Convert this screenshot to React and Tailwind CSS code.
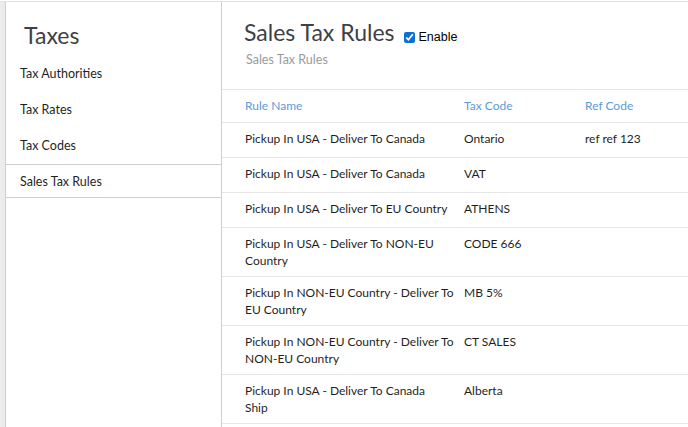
import React from "react";

const menu = ["Tax Authorities", "Tax Rates", "Tax Codes", "Sales Tax Rules"];

// each rule name is kept as the lines it breaks into in the narrow column
const rules = [
  { name: ["Pickup In USA - Deliver To Canada"], code: "Ontario", ref: "ref ref 123" },
  { name: ["Pickup In USA - Deliver To Canada"], code: "VAT", ref: "" },
  { name: ["Pickup In USA - Deliver To EU Country"], code: "ATHENS", ref: "" },
  { name: ["Pickup In USA - Deliver To NON-EU", "Country"], code: "CODE 666", ref: "" },
  { name: ["Pickup In NON-EU Country - Deliver To", "EU Country"], code: "MB 5%", ref: "" },
  { name: ["Pickup In NON-EU Country - Deliver To", "NON-EU Country"], code: "CT SALES", ref: "" },
  { name: ["Pickup In USA - Deliver To Canada", "Ship"], code: "Alberta", ref: "" },
];

export default function App() {
  return (
    <div
      className="flex h-[427px] w-[688px] overflow-hidden bg-white pt-px"
      style={{ fontFamily: "Lato, 'Open Sans', sans-serif" }}
    >
      <div className="flex w-full border-t border-[#e3e3e3]">
        {/* left rail */}
        <div className="w-[5px] shrink-0 bg-[#ececec]" />
        {/* sidebar */}
        <aside className="w-[217px] shrink-0 border-x border-[#cfcfcf]">
          <h1 className="pl-[18px] pt-[18px] text-[23px] leading-[30px] text-[#3f3f46]">Taxes</h1>
          <ul className="mt-[6px] text-[12.5px] text-[#1f1f1f]">
            {menu.map((m, i) => (
              <li
                key={m}
                className={
                  i === 3
                    ? "border-y border-[#cfcfcf] pb-[7px] pl-[14px] pt-[9px] leading-[16px]"
                    : "h-[36px] pl-[14px] pt-[10px] leading-[16px]"
                }
              >
                {m}
              </li>
            ))}
          </ul>
        </aside>
        {/* main panel */}
        <main className="flex-1 overflow-hidden">
          <div className="h-[88px] border-b border-[#e6e6e6] pl-[22px] pt-[15px]">
            <div className="flex items-center">
              <h2 className="text-[23px] leading-[30px] text-[#3f3f46]">Sales Tax Rules</h2>
              <label
                className="ml-[9px] mt-[10px] flex items-center text-[12.5px] text-black"
                style={{ fontFamily: "'Liberation Sans', Arial, sans-serif" }}
              >
                <input type="checkbox" defaultChecked className="mr-[4px] h-[11px] w-[11px] accent-[#0b6fd6]" />
                Enable
              </label>
            </div>
            <div className="mt-[4px] pl-[2px] text-[12.5px] text-[#9a9a9a]">Sales Tax Rules</div>
          </div>
          <div className="grid h-[33px] grid-cols-[219px_121px_1fr] items-center border-b border-[#e6e6e6] pl-[23px] text-[12px] text-[#5b9bd8]">
            <div>Rule Name</div>
            <div>Tax Code</div>
            <div>Ref Code</div>
          </div>
          {rules.map((r, i) => (
            <div
              key={i}
              className="grid min-h-[35px] grid-cols-[219px_121px_1fr] border-b border-[#e6e6e6] pb-[7px] pl-[23px] pt-[7px] text-[12px] leading-[17px] text-[#1f1f1f]"
            >
              <div>
                {r.name.map((line) => (
                  <div key={line}>{line}</div>
                ))}
              </div>
              <div>{r.code}</div>
              <div>{r.ref}</div>
            </div>
          ))}
        </main>
      </div>
    </div>
  );
}
